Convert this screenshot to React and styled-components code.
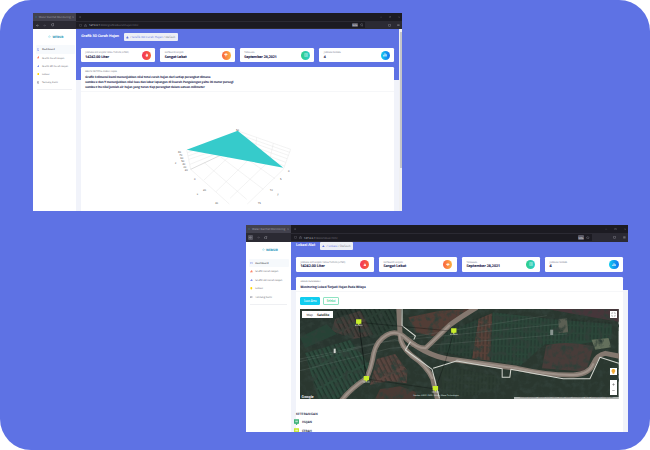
import React from 'react';
import styled, { createGlobalStyle, ThemeProvider } from 'styled-components';

/* Sizes are given in the small window's pixels and scaled by the theme's unit. */
const u = (n) => ({ theme }) => `${(n * theme.unit).toFixed(3)}px`;

const Global = createGlobalStyle`
  * { box-sizing: border-box; }
  body { margin: 0; background: #fff; font-family: 'Open Sans', 'Noto Sans', sans-serif; text-rendering: geometricPrecision; }
  svg { display: block; flex: none; }
`;

const Canvas = styled.main`
  width: 650px;
  height: 450px;
  border-radius: 31px;
  background: #5e72e4;
  overflow: hidden;
  display: flex;
  flex-direction: column;
  padding: 13px 22px 18px 33px;
  gap: 14px;
`;

const Window = styled.section`
  width: ${(p) => p.$w}px;
  height: ${(p) => p.$h}px;
  align-self: ${(p) => p.$align};
  flex: none;
  overflow: hidden;
  display: flex;
  flex-direction: column;
  background: #fff;
`;

const TabBar = styled.div`
  height: ${u(8)};
  flex: none;
  display: flex;
  align-items: center;
  background: #1c1b22;
  color: #8b8b92;
  font-size: ${u(2.7)};
`;

const Tab = styled.div`
  width: ${u(43)};
  height: 100%;
  display: flex;
  align-items: center;
  gap: ${u(1.4)};
  padding: 0 ${u(2)} 0 ${u(2.4)};
  background: #42414d;
  color: #a2a2ab;
  white-space: nowrap;
  margin-right: ${u(3)};
  & > :last-child { margin-left: auto; }
`;

const Controls = styled.div`
  margin-left: auto;
  display: flex;
  align-items: center;
  gap: ${u(6.4)};
  padding-right: ${u(2)};
`;

const ToolBar = styled.div`
  height: ${u(8.1)};
  flex: none;
  display: flex;
  align-items: center;
  background: #2b2a33;
  color: #b0b0b8;
`;

const NavButtons = styled.div`
  width: ${u(43.3)};
  display: flex;
  align-items: center;
  gap: ${u(2.6)};
  padding-left: ${u(1.8)};
`;

const NavItem = styled.span`
  display: flex;
  border-radius: 1px;
  padding: ${u(1)};
  background: ${(p) => (p.$active ? '#55545f' : 'transparent')};
`;

const Address = styled.div`
  width: ${u(289)};
  height: ${u(6.9)};
  display: flex;
  align-items: center;
  gap: ${u(1.8)};
  padding: 0 ${u(2)} 0 ${u(3)};
  background: #1c1b22;
  font-size: ${u(2.65)};
  color: #74737d;
  white-space: nowrap;
  & b { color: #d0d0d6; font-weight: 400; }
`;

const ZoomBadge = styled.span`
  margin-left: auto;
  width: ${u(6)};
  height: ${u(4)};
  display: grid;
  place-items: center;
  border-radius: 1px;
  background: #5b5a66;
  color: #f4f4f8;
  font-size: ${u(2.4)};
`;

const Page = styled.div`
  flex: 1;
  min-height: 0;
  display: flex;
`;

const Sidebar = styled.nav`
  width: ${u(43.1)};
  flex: none;
  background: #fff;
  display: flex;
  flex-direction: column;
`;

const Brand = styled.div`
  height: ${u(16.2)};
  display: flex;
  align-items: center;
  justify-content: center;
  gap: ${u(0.5)};
  padding-left: ${u(3)};
  color: #2191b5;
  font-size: ${u(3)};
  font-weight: 700;
`;

const MenuItem = styled.a`
  height: ${u(8.22)};
  margin: 0 ${u(1.5)} 0 ${u(2.6)};
  padding-left: ${u(1.2)};
  display: flex;
  align-items: center;
  gap: ${u(2.6)};
  border-radius: 1px;
  background: ${(p) => (p.$active ? '#f6f9fc' : 'transparent')};
  color: ${(p) => (p.$active ? '#1c1d26' : '#63646c')};
  font-size: ${u(2.5)};
  white-space: nowrap;
`;

const SideRule = styled.hr`
  border: 0;
  width: ${u(35)};
  height: 1px;
  margin: ${u(2.2)} auto 0;
  background: #eff0f3;
`;

const Main = styled.div`
  flex: 1;
  min-width: 0;
  display: flex;
  flex-direction: column;
  padding: 0 ${(p) => p.$right}px 0 ${u(4.9)};
  background: linear-gradient(#5e72e4 ${(p) => p.$band}px, #f1f3fa ${(p) => p.$band}px);
`;

const Heading = styled.header`
  height: ${(p) => p.$h}px;
  padding-top: ${(p) => p.$top}px;
  margin-left: ${u(0.2)};
  flex: none;
  display: flex;
  align-items: flex-start;
  gap: ${u(4.6)};
  white-space: nowrap;
`;

const Title = styled.h1`
  margin: 0;
  line-height: ${u(8)};
  font-size: ${u(3.5)};
  font-weight: 600;
  color: #f6f7ff;
  -webkit-text-stroke: 0.12px currentColor;
`;

const Crumbs = styled.div`
  height: ${u(8.1)};
  display: flex;
  align-items: center;
  gap: ${u(1.3)};
  padding: 0 ${u(2.4)};
  border-radius: 1px;
  background: #edeff6;
  color: #7e828e;
  font-size: ${u(2.95)};
  & b { color: #5e72e4; font-weight: 400; }
`;

const Stats = styled.div`
  display: grid;
  grid-template-columns: repeat(4, 1fr);
  gap: ${u(5)};
  flex: none;
`;

const Stat = styled.article`
  height: ${u(14.3)};
  display: flex;
  justify-content: space-between;
  align-items: center;
  padding: 0 ${u(4.3)};
  border-radius: 1.2px;
  background: #fff;
  white-space: nowrap;
`;

const Label = styled.div`
  font-size: ${u(2.3)};
  line-height: ${u(4)};
  color: #72768c;
`;

const Value = styled.div`
  font-size: ${u(3.5)};
  line-height: ${u(5.2)};
  font-weight: 600;
  color: #2a2a52;
  -webkit-text-stroke: 0.16px currentColor;
`;

const Disc = styled.div`
  width: ${u(9)};
  height: ${u(9)};
  border-radius: 50%;
  display: grid;
  place-items: center;
  background: ${(p) => p.$fill};
`;

const Panel = styled.article`
  flex: 1;
  min-height: 0;
  margin-top: ${u(5.1)};
  border-radius: 1.2px 1.2px 0 0;
  background: #fff;
  overflow: ${(p) => (p.$open ? 'visible' : 'hidden')};
`;

const PanelHead = styled.div`
  height: ${(p) => p.$h}px;
  padding: ${u(3)} ${u(4.3)} 0;
  border-bottom: 1px solid #f6f7f9;
  white-space: nowrap;
`;

const Caption = styled.div`
  font-size: ${u(2.1)};
  line-height: ${u(4.4)};
  color: #4c4f5e;
`;

const Line = styled.p`
  margin: 0;
  font-size: ${u(2.93)};
  line-height: ${u(5.05)};
  font-weight: 600;
  color: #32355a;
  -webkit-text-stroke: 0.14px currentColor;
`;

const Plot = styled.div`
  padding: 18px 0 0 69px;
`;

const Scrollbar = styled.div`
  width: 3px;
  flex: none;
  padding: 3px 0.5px 0;
  background: #f0f0f1;
  &::before { content: ''; display: block; height: 136px; background: #c4c5c9; }
`;

const Actions = styled.div`
  display: flex;
  gap: 2.4px;
  padding: 4.4px 4.3px;
`;

const Action = styled.button`
  width: ${(p) => p.$w}px;
  height: 8.3px;
  padding: 0;
  display: grid;
  place-items: center;
  border: 0.6px solid ${(p) => (p.$solid ? '#11cdef' : '#8fe3c2')};
  border-radius: 1px;
  background: ${(p) => (p.$solid ? '#11cdef' : '#fff')};
  color: ${(p) => (p.$solid ? '#e9fbff' : '#2dce89')};
  font: 600 2.7px 'Open Sans', sans-serif;
`;

const MapFrame = styled.div`
  position: relative;
  width: 318.6px;
  height: 90px;
  margin-left: 4.4px;
  overflow: hidden;
`;

const Over = styled.div`
  position: absolute;
  left: ${(p) => p.$x}px;
  top: ${(p) => p.$y}px;
  width: ${(p) => p.$w}px;
  height: ${(p) => p.$h}px;
  display: flex;
  flex-direction: ${(p) => p.$dir || 'row'};
  align-items: center;
  justify-content: space-evenly;
  background: ${(p) => p.$bg || '#fff'};
  color: ${(p) => p.$ink || '#666'};
  font: ${(p) => p.$weight || 400} ${(p) => p.$size || 3}px Roboto, sans-serif;
  white-space: nowrap;
  & b { color: #111; font-weight: 700; }
`;

const Legend = styled.div`
  margin-top: 12.8px;
  display: flex;
  flex-direction: column;
  color: #3a3d58;
  font-size: 3.1px;
  font-weight: 600;
  -webkit-text-stroke: 0.1px currentColor;
`;

const LegendTitle = styled.div`
  line-height: 5px;
  letter-spacing: 0.16px;
`;

const LegendRow = styled.div`
  height: 9.2px;
  padding-top: 0.6px;
  display: flex;
  align-items: center;
  gap: 3.2px;
  margin-left: -2.4px;
  line-height: 3px;
`;

const Stroke = ({ d, size = 3, color = 'currentColor', width = 1.5 }) => (
  <svg width={size} height={size} viewBox="0 0 12 12" fill="none" stroke={color} strokeWidth={width}>
    <path d={d} />
  </svg>
);

const Solid = ({ d, size = 3, color = 'currentColor' }) => (
  <svg width={size} height={size} viewBox="0 0 12 12" fill={color}>
    <path d={d} />
  </svg>
);

const icon = {
  back: 'M11 6H2M6 2L2 6l4 4',
  forward: 'M1 6h9M6 2l4 4-4 4',
  reload: 'M10 4A4.7 4.7 0 1 0 10.7 7M10.5 1v3.5H7',
  shield: 'M6 1l4.5 1.5V6c0 3-2 4.5-4.5 5.3C3.5 10.5 1.5 9 1.5 6V2.5z',
  lock: 'M2 5h8v6H2zM4 5V2h4v3',
  star: 'M6 1l1.5 3.2 3.5.5-2.5 2.4.6 3.5L6 9 2.9 10.6l.6-3.5L1 4.7l3.5-.5z',
  close: 'M2 2l8 8M10 2l-8 8',
  plus: 'M6 1v10M1 6h10',
  square: 'M2 3h7v7H2zM4 3V1h7v7H9',
  menu: 'M1 3h10M1 6h10M1 9h10',
  screen: 'M1.5 1h9v9h-9zM3 11.5h6',
  bars: 'M1 6h3v5H1zM5 1h3v10H5zM9 4h3v7H9z',
  chart: 'M0 10h12v2H0zM1 6h2.5v3H1zM4.5 1h3v8h-3zM8.5 4H11v5H8.5z',
  pin: 'M6 0a4.5 4.5 0 0 1 3 8L8 12H4L3 8a4.5 4.5 0 0 1 3-8z',
  list: 'M2 1h3v10H2zM6 1h5v2H6zM6 5h5v2H6zM6 9h5v2H6z',
  home: 'M6 1l5 5H10v5H2V6H1z',
  drop: 'M6 0C7 3 10 5 10 8a4 4 0 0 1-8 0c0-2 1-3 2-4l1 1z',
  cloud: 'M3 2h6l3 3-3 2H7v4H5V7H3L0 5z',
  calendar: 'M2 1.5h8.5v9H2zM4 4h5M4 6h5M4 8h5',
};

const menu = [
  ['Dashboard', icon.screen, '#5e72e4', true],
  ['Grafik Curah Hujan', icon.chart, '#fb6340'],
  ['Grafik 3D Curah Hujan', icon.chart, '#5e72e4'],
  ['Lokasi', icon.pin, '#ffd600'],
  ['Tentang Kami', icon.list, '#77798a'],
];

const stats = [
  ['JUMLAH AIR HUJAN YANG TURUN (LITER)', '14242.00 Liter', 'linear-gradient(90deg,#f5365c,#f56036)', icon.drop],
  ['KATEGORI HUJAN', 'Sangat Lebat', 'linear-gradient(90deg,#fb6340,#fbb140)', icon.cloud],
  ['TANGGAL', 'September 28,2021', 'linear-gradient(90deg,#2dce89,#2dcecc)', icon.calendar],
  ['JUMLAH NODES', '4', 'linear-gradient(90deg,#11cdef,#1171ef)', icon.bars],
];

function Chrome({ path, active }) {
  return (
    <>
      <TabBar>
        <Tab>
          <Stroke d={icon.shield} size={2} color="#2788a8" />
          <span>Water Rainfall Monitoring</span>
          <Stroke d={icon.close} size={2.2} />
        </Tab>
        <Stroke d={icon.plus} size={2.2} />
        <Controls>
          <Stroke d="M1 6h10" size={2.4} width={1} />
          <Stroke d={icon.square} size={2.6} width={1} />
          <Stroke d={icon.close} size={2.4} width={1} />
        </Controls>
      </TabBar>
      <ToolBar>
        <NavButtons>
          <NavItem $active={active}><Stroke d={icon.back} /></NavItem>
          <NavItem><Stroke d={icon.forward} color="#686773" /></NavItem>
          <NavItem><Stroke d={icon.reload} size={3.2} /></NavItem>
        </NavButtons>
        <Address>
          <Stroke d={icon.shield} />
          <Stroke d={icon.lock} />
          <span><b>127.0.0.1</b>{path}</span>
          <ZoomBadge>50%</ZoomBadge>
          <Stroke d={icon.star} size={3.6} width={1.4} />
        </Address>
        <Controls>
          <Stroke d={icon.shield} size={3} />
          <Stroke d={icon.menu} size={2.8} />
        </Controls>
      </ToolBar>
    </>
  );
}

function SideNav() {
  return (
    <Sidebar>
      <Brand>
        <Stroke d="M6 1L1 6l5 5M4 6h7" size={3.4} color="#57c8d8" width={1.3} />
        WEBSIR
      </Brand>
      {menu.map(([name, d, color, on]) => (
        <MenuItem key={name} $active={on}>
          {on ? <Stroke d={d} size={2.6} color={color} /> : <Solid d={d} size={2.6} color={color} />}
          {name}
        </MenuItem>
      ))}
      <SideRule />
    </Sidebar>
  );
}

const StatRow = () => (
  <Stats>
    {stats.map(([label, value, fill, d]) => (
      <Stat key={value}>
        <div>
          <Label>{label}</Label>
          <Value>{value}</Value>
        </div>
        <Disc $fill={fill}>
          {d === icon.calendar
            ? <Stroke d={d} size={4} color="#fffb" width={1.3} />
            : <Solid d={d} size={3.7} color="#fffd" />}
        </Disc>
      </Stat>
    ))}
  </Stats>
);

function SurfaceChart() {
  return (
    <svg width="170" height="101" viewBox="0 0 510 303" fontFamily="Open Sans, sans-serif">
      <g stroke="#e6e6e6" strokeWidth="1.5" fill="none">
        <path d="M122 178L238 282M163 158L290 268M207 137L340 238M250 118L375 206M400 178L292 282M350 160L240 265M300 145L198 245M240 137L162 210" />
        <path d="M262 62L422 118L400 178M262 72L419 127M262 82L415 136M262 92L411 146M262 102L407 157M262 112L403 168M320 83L314 135M370 100L358 155M110 119L122 178M112 128L240 82M114 138L230 98M117 148L220 113M120 163L213 125" />
        <path d="M122 178L209 137" stroke="#bdbdbd" />
      </g>
      <path d="M110 119L263 62L400 173z" fill="#36cbcb" />
      <g fontSize="8" fill="#444">
        <text x="258" y="64">50</text>
        <text x="84" y="129">80</text><text x="88" y="138">70</text><text x="91" y="147">60</text>
        <text x="94" y="156">50</text><text x="97" y="165">40</text><text x="100" y="174">30</text><text x="104" y="184">20</text>
        <text x="75" y="163">z</text>
        <text x="132" y="210">0</text><text x="159" y="242">20</text><text x="195" y="281">40</text><text x="140" y="255">x</text>
        <text x="414" y="185">0</text><text x="390" y="211">5</text><text x="359" y="242">10</text><text x="323" y="281">15</text><text x="382" y="255">y</text>
      </g>
    </svg>
  );
}

const pins = [[176, 38], [199, 208], [406, 238], [461, 65]];

function Satellite() {
  return (
    <svg width="318.6" height="90" viewBox="0 0 955 270" preserveAspectRatio="none">
      <defs>
        <pattern id="rows" width="13" height="60" patternUnits="userSpaceOnUse" patternTransform="rotate(-27)">
          <path d="M3 0V54" stroke="#101b17" strokeWidth="3.5" opacity=".6" />
        </pattern>
        <pattern id="upright" width="11" height="23" patternUnits="userSpaceOnUse" patternTransform="rotate(2)">
          <path d="M3 0V19" stroke="#14231d" strokeWidth="2.5" opacity=".65" />
        </pattern>
        <filter id="grain" x="0" y="0" width="100%" height="100%">
          <feTurbulence type="fractalNoise" baseFrequency=".055" numOctaves="4" seed="8" />
          <feColorMatrix values="0 0 0 0 .03  0 0 0 0 .05  0 0 0 0 .04  2.8 0 0 0 -1.25" />
        </filter>
      </defs>
      <path fill="#2a372f" d="M0 0h955v270H0z" />
      <path fill="#28352f" d="M0 20L110 0H220L260 90L200 140L0 110z" />
      <path fill="#463e3a" d="M105 30L180 5L235 75L160 90L95 65z" />
      <path fill="#274236" d="M0 85L80 45L110 75L15 118z" />
      <path fill="#2d4b3d" d="M15 132L150 93L208 165L193 208L110 270H55z" />
      <path fill="url(#rows)" d="M15 132L150 93L208 165L193 208L110 270H55z" />
      <path fill="#2a3d33" d="M180 0H290V60L225 88z" />
      <path fill="url(#rows)" d="M100 0H290V60L225 88L120 80z" />
      <path fill="#5a453f" d="M230 150L285 135L322 185L320 223L265 216L210 228z" />
      <path fill="url(#rows)" d="M230 150L285 135L322 185L320 223L265 216L210 228z" opacity=".7" />
      <path fill="#523d36" d="M325 25L420 5L510 0L440 55L400 82L345 70z" />
      <path fill="#493a34" d="M240 240L300 232L350 250L345 270H225z" />
      <path fill="#584139" d="M535 30L577 12L570 155L515 148z" />
      <path fill="#2b4639" d="M577 10L750 30L935 45V90L840 105L735 105L660 170L572 155z" />
      <path fill="#2a4035" d="M440 70L535 30L515 148L410 125z" />
      <path fill="url(#upright)" d="M440 60L577 10L935 40V90L735 105L660 170L410 130z" />
      <path fill="#46363a" d="M740 0H955V38L850 20z" />
      <path fill="#483c39" d="M738 110Q790 93 880 112L858 188L725 178z" />
      <path fill="#64705c" d="M874 92L925 87L933 115L885 122z" />
      <path fill="#5b5f53" d="M775 30L800 28L804 70L775 73z" />
      <path fill="#2c3b31" d="M420 170L610 205L590 245L480 265H430z" />
      <path fill="url(#upright)" d="M430 170L610 205L590 245L480 265H430z" opacity=".7" />
      <path filter="url(#grain)" d="M0 0h955v270H0z" />
      <g fill="none" stroke="#98a59b" strokeWidth="2" opacity=".25">
        <path d="M0 150L240 100L780 45M0 185L270 118L800 75M0 158L290 90L740 20" />
      </g>
      <g fill="none" stroke="#84786f" strokeWidth="15" strokeLinejoin="round">
        <path d="M124 275Q150 240 199 208Q213 180 221 133Q230 95 260 78Q290 60 320 90Q350 118 376 118Q395 100 449 48Q480 25 530 -5" />
        <path d="M296 -3L300 78Q300 110 335 140Q380 170 398 210L413 275" />
        <path d="M320 90Q390 148 469 153L650 178Q750 200 820 198Q868 195 880 163Q890 138 915 133L960 142" />
      </g>
      <g fill="none" stroke="#c0b4aa" strokeWidth="6" opacity=".45" strokeLinejoin="round">
        <path d="M124 275Q150 240 199 208Q213 180 221 133Q230 95 260 78Q290 60 320 90Q350 118 376 118Q395 100 449 48M469 153L650 178Q750 200 820 198Q868 195 880 163M298 78Q300 110 335 140Q380 170 398 210" />
      </g>
      <g fill="none" stroke="#d3d6cf" strokeWidth="3" strokeLinejoin="round">
        <path d="M306 0V50L346 81L341 92M331 98L316 123L396 181L418 268M399 178L469 156L606 179V205H629L632 181L789 209H869L899 145L955 163" />
      </g>
      <path d="M176 40L461 67L435 160L406 240L199 210zM176 40L199 210" fill="none" stroke="#050806" strokeWidth="1.5" opacity=".6" />
      {pins.map(([x, y]) => (
        <g key={x}>
          <path d={`M${x - 8} ${y - 7}h16v13h-5l-3 5-3-5h-5z`} fill="#c8ee2c" />
          <path d={`M${x - 11} ${y + 11}h22`} stroke="#dce3d4" strokeWidth="3" strokeDasharray="3 1" opacity=".8" />
        </g>
      ))}
      <path d="M101 119h6v13h-6z" fill="#d1d4cf" />
      <path d="M750 62h9v16h-9z" fill="#a0a8a5" opacity=".8" />
    </svg>
  );
}

const Marker = ({ color }) => (
  <svg width="5.2" height="6.5" viewBox="0 0 16 20">
    <path d="M0 1h16v14h-5l-3 5-3-5H0z" fill={color} />
    <path d="M4 5h8v5H4z" fill="#fff9" />
  </svg>
);

function GraphWindow() {
  return (
    <ThemeProvider theme={{ unit: 1 }}>
      <Window $w={369} $h={198} $align="flex-start">
        <Chrome path=":8000/grafik3dcurahhujan.html" />
        <Page>
          <SideNav />
          <Main $band={51} $right={5}>
            <Heading $h={19} $top={4}>
              <Title>Grafik 3D Curah Hujan</Title>
              <Crumbs>
                <Solid d={icon.home} size={2.8} color="#5e72e4" />
                <span>/ <b>Grafik 3D Curah Hujan</b> / Default</span>
              </Crumbs>
            </Heading>
            <StatRow />
            <Panel>
              <PanelHead $h={25}>
                <Caption>GRAFIK 3D TOTAL CURAH HUJAN</Caption>
                <Line>Grafik 3 dimensi kami menunjukkan nilai total curah hujan dari setiap perangkat dimana</Line>
                <Line>sumbu x dan Y menunjukkan nilai luas dan lebar lapangan di Daerah Pangalengan yaitu 20 meter persegi</Line>
                <Line>sumbu z itu nilai jumlah air hujan yang turun tiap perangkat dalam satuan milimeter</Line>
              </PanelHead>
              <Plot><SurfaceChart /></Plot>
            </Panel>
          </Main>
          <Scrollbar />
        </Page>
      </Window>
    </ThemeProvider>
  );
}

function MapWindow() {
  return (
    <ThemeProvider theme={{ unit: 1.04 }}>
      <Window $w={382} $h={207} $align="flex-end">
        <Chrome path=":8000/lokasi.html" active />
        <Page>
          <SideNav />
          <Main $band={48.3} $right={5}>
            <Heading $h={15.3} $top={-0.2}>
              <Title>Lokasi Alat</Title>
              <Crumbs>
                <Solid d={icon.home} size={2.8} color="#5e72e4" />
                <span>/ <b>Lokasi</b> / Default</span>
              </Crumbs>
            </Heading>
            <StatRow />
            <Panel $open>
              <PanelHead $h={15.2}>
                <Caption>LOKASI PERANGKAT</Caption>
                <Line>Monitoring Lokasi Terjadi Hujan Pada Wilaya</Line>
              </PanelHead>
              <Actions>
                <Action $solid $w={20.2}>Luas Area</Action>
                <Action $w={16.7}>Seleksi</Action>
              </Actions>
              <MapFrame>
                <Satellite />
                <Over $x={2} $y={2} $w={31} $h={7} $size={3.3}><span>Map</span><b>Satellite</b></Over>
                <Over $x={310} $y={1.8} $w={7} $h={7}><Stroke d="M2 5V2h3M7 2h3v3M10 7v3H7M5 10H2V7" size={5} width={1} /></Over>
                <Over $x={310} $y={58.3} $w={7} $h={7}><Solid d={icon.pin} size={4.8} color="#f2aa32" /></Over>
                <Over $x={310} $y={71} $w={7} $h={15} $dir="column">
                  <Stroke d={icon.plus} size={3} width={2} />
                  <Stroke d="M1 6h10" size={3} width={2} />
                </Over>
                <Over $x={1.3} $y={85.4} $w={11} $h={4} $bg="transparent" $ink="#fff" $size={3.8} $weight={500}>Google</Over>
                <Over $x={113} $y={85.5} $w={45} $h={3} $bg="transparent" $ink="#dfe3e0" $size={2}>Gambar ©2021 CNES / Airbus, Maxar Technologies</Over>
                <Over $x={214} $y={87.7} $w={104.6} $h={2.3} $bg="#e6e8e7b0" $ink="#555" $size={2}>Pintasan keyboard &nbsp; Gambar ©2021 CNES / Airbus, Maxar Technologies &nbsp; 20 m &nbsp; Persyaratan Penggunaan</Over>
              </MapFrame>
              <Legend>
                <LegendTitle>KETERANGAN</LegendTitle>
                <LegendRow><Marker color="#3eb27a" />HUJAN</LegendRow>
                <LegendRow><Marker color="#c6e72d" />CERAH</LegendRow>
              </Legend>
            </Panel>
          </Main>
        </Page>
      </Window>
    </ThemeProvider>
  );
}

export default function App() {
  return (
    <>
      <Global />
      <Canvas>
        <GraphWindow />
        <MapWindow />
      </Canvas>
    </>
  );
}
